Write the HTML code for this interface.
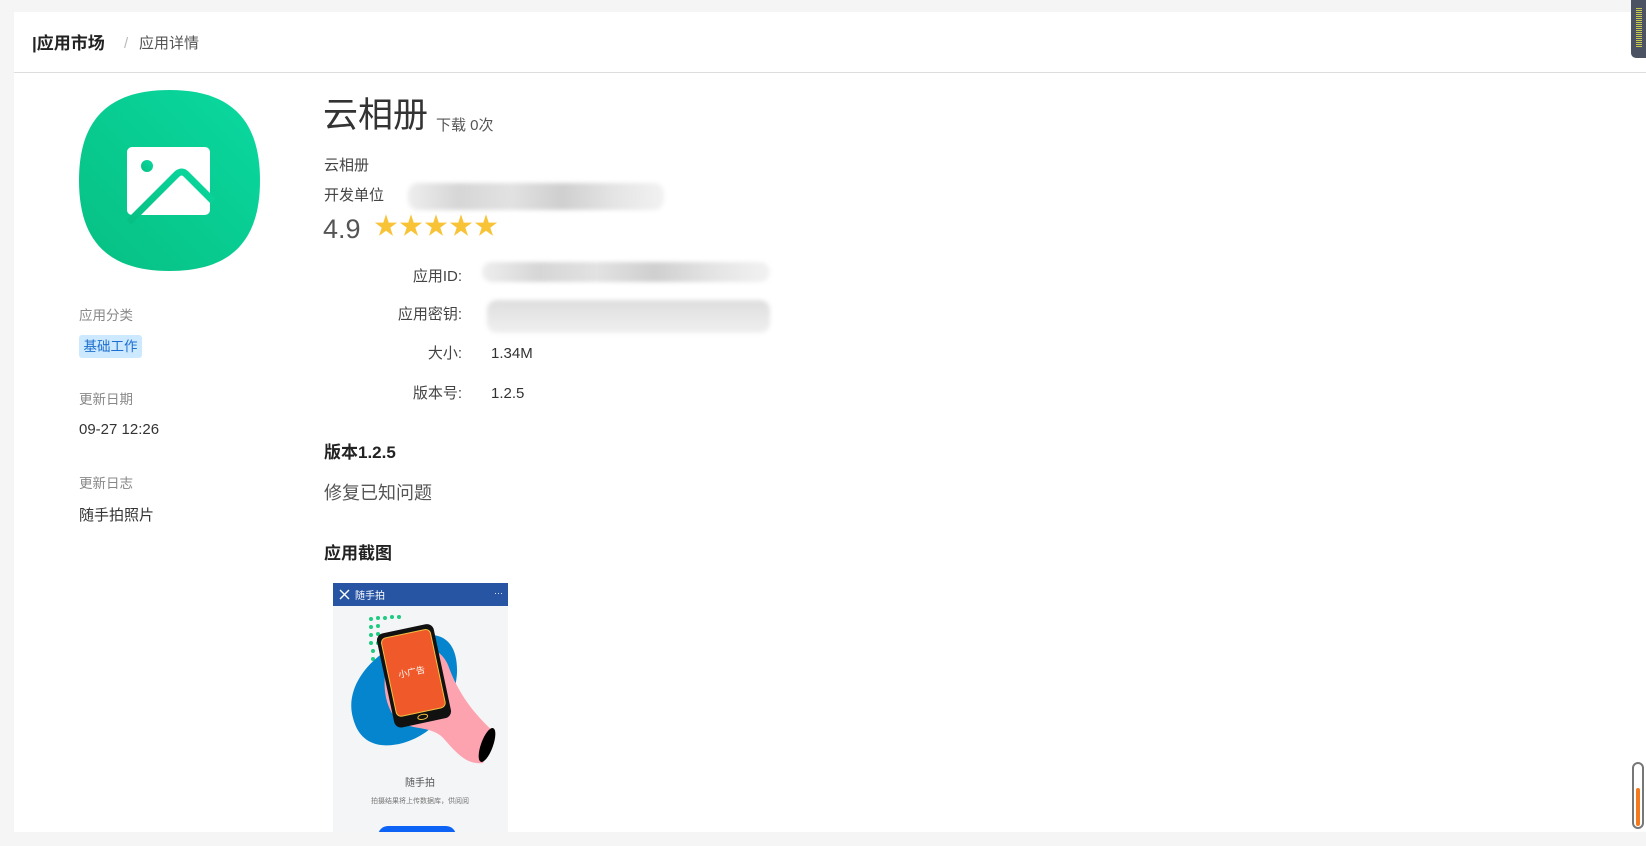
<!DOCTYPE html>
<html><head><meta charset="utf-8">
<style>
*{margin:0;padding:0;box-sizing:border-box}
body{width:1646px;height:846px;background:#f5f5f5;font-family:"Liberation Sans","Noto Sans CJK SC",sans-serif;position:relative;overflow:hidden;color:#333}
.card{position:absolute;left:14px;top:12px;width:1632px;height:820px;background:#fff}
.hdr{position:absolute;left:0;top:0;width:100%;height:61px;border-bottom:1px solid #ddd}
.a{position:absolute;white-space:nowrap;line-height:1}
.blur{position:absolute;border-radius:10px;background:linear-gradient(90deg,#eee,#d6d6d6 20%,#e2e2e2 40%,#cfcfcf 60%,#e4e4e4 80%,#f2f2f2);filter:blur(2px)}
.lab{position:absolute;width:140px;text-align:right;font-size:15px;color:#444;line-height:1}
</style></head><body>
<div class="card">
<div class="hdr"></div>
</div>
<div class="a" style="left:32px;top:35px;font-size:17px;font-weight:bold;color:#222">|应用市场</div>
<div class="a" style="left:124px;top:36px;font-size:15px;color:#bbb">/</div>
<div class="a" style="left:139px;top:36px;font-size:15px;color:#555">应用详情</div>

<svg style="position:absolute;left:79px;top:90px" width="181" height="181" viewBox="0 0 181 181">
<defs><linearGradient id="g" x1="1" y1="0" x2="0" y2="1"><stop offset="0" stop-color="#0ad9a0"/><stop offset="1" stop-color="#07bf82"/></linearGradient></defs>
<path d="M90.5 0C150 0 181 28 181 90.5S150 181 90.5 181 0 153 0 90.5 31 0 90.5 0Z" fill="url(#g)"/>
<rect x="48" y="57" width="83" height="68" rx="5" fill="#fff"/>
<circle cx="68" cy="76" r="6" fill="url(#g)"/>
<path d="M50 132 L98 84 Q103 80 107 84 L134 111" stroke="url(#g)" stroke-width="7" fill="none"/>
</svg>

<div class="a" style="left:79px;top:309px;font-size:13.5px;color:#888">应用分类</div>
<div class="a" style="left:79px;top:335px;width:63px;height:23px;background:#cde9ff;border-radius:3px;color:#1d6fcf;font-size:13.5px;padding-top:5px;text-align:center">基础工作</div>
<div class="a" style="left:79px;top:393px;font-size:13.5px;color:#888">更新日期</div>
<div class="a" style="left:79px;top:422px;font-size:15px;color:#333">09-27 12:26</div>
<div class="a" style="left:79px;top:477px;font-size:13.5px;color:#888">更新日志</div>
<div class="a" style="left:79px;top:508px;font-size:15px;color:#333">随手拍照片</div>

<div class="a" style="left:323px;top:98px;font-size:35px;color:#333">云相册</div>
<div class="a" style="left:436px;top:118px;font-size:15px;color:#555">下载 0次</div>
<div class="a" style="left:324px;top:158px;font-size:15px;color:#444">云相册</div>
<div class="a" style="left:324px;top:188px;font-size:15px;color:#444">开发单位</div>
<div class="blur" style="left:408px;top:183px;width:256px;height:27px"></div>
<div class="a" style="left:323px;top:216px;font-size:27px;color:#555">4.9</div>
<div class="a" style="left:374px;top:215px;font-size:24px;color:#f8c336;letter-spacing:1px">★★★★★</div>

<div class="lab" style="left:322px;top:269px">应用ID:</div>
<div class="blur" style="left:482px;top:262px;width:288px;height:20px"></div>
<div class="lab" style="left:322px;top:307px">应用密钥:</div>
<div class="blur" style="left:487px;top:300px;width:283px;height:33px;background:linear-gradient(180deg,#dedede,#f0f0f0)"></div>
<div class="lab" style="left:322px;top:346px">大小:</div>
<div class="a" style="left:491px;top:346px;font-size:15px;color:#333">1.34M</div>
<div class="lab" style="left:322px;top:386px">版本号:</div>
<div class="a" style="left:491px;top:386px;font-size:15px;color:#333">1.2.5</div>

<div class="a" style="left:324px;top:444px;font-size:17px;font-weight:bold;color:#222">版本1.2.5</div>
<div class="a" style="left:324px;top:484px;font-size:18px;color:#555">修复已知问题</div>
<div class="a" style="left:324px;top:545px;font-size:17px;font-weight:bold;color:#222">应用截图</div>

<svg style="position:absolute;left:333px;top:583px" width="175" height="249" viewBox="0 0 175 249">
<rect width="175" height="249" fill="#f4f5f7"/>
<rect width="175" height="23" fill="#2755a3"/>
<path d="M7 7l9 9M16 7l-9 9" stroke="#fff" stroke-width="1.4"/>
<text x="22" y="16" font-size="10" fill="#fff" font-family="Noto Sans CJK SC,sans-serif">随手拍</text>
<text x="161" y="13" font-size="9" fill="#fff">···</text>
<g fill="#1ecb82">
<circle cx="38" cy="36" r="2"/><circle cx="45" cy="35" r="2"/><circle cx="52" cy="35" r="2"/><circle cx="59" cy="34" r="2"/><circle cx="66" cy="34" r="2"/>
<circle cx="38" cy="44" r="2"/><circle cx="45" cy="43" r="2"/><circle cx="38" cy="52" r="2"/><circle cx="45" cy="51" r="2"/><circle cx="38" cy="60" r="2"/><circle cx="45" cy="60" r="2"/><circle cx="40" cy="68" r="2"/><circle cx="40" cy="76" r="2"/><circle cx="42" cy="84" r="2"/><circle cx="42" cy="92" r="2"/><circle cx="42" cy="100" r="2"/><circle cx="44" cy="108" r="2"/>
</g>
<path d="M20 135C10 100 45 65 80 55 110 45 125 60 124 90 122 120 105 150 70 160 40 168 25 155 20 135Z" fill="#0485ce"/>
<path d="M55 80C48 100 52 125 65 138 80 148 100 142 112 157 125 172 135 182 150 180L162 150C140 130 125 110 115 82 108 65 90 60 72 66Z" fill="#fda3b0"/>
<ellipse cx="154" cy="162" rx="6" ry="18" transform="rotate(20 154 162)" fill="#000"/>
<g transform="rotate(-12 80 93)">
<rect x="52" y="45" width="58" height="96" rx="7" fill="#111"/>
<rect x="56" y="50" width="50" height="80" rx="5" fill="#f05a2a" stroke="#f2c040" stroke-width="1"/>
<ellipse cx="81" cy="135" rx="5" ry="2.5" fill="none" stroke="#f2c040"/>
<text x="66" y="92" font-size="9" fill="#fff" font-family="Noto Sans CJK SC,sans-serif">小广告</text>
</g>
<text x="87" y="203" font-size="10" fill="#555" text-anchor="middle" font-family="Noto Sans CJK SC,sans-serif">随手拍</text>
<text x="87" y="220" font-size="7" fill="#777" text-anchor="middle" font-family="Noto Sans CJK SC,sans-serif">拍摄结果将上传数据库，供阅阅</text>
<rect x="45" y="243" width="78" height="20" rx="10" fill="#0d63f5"/>
</svg>

<div style="position:absolute;left:1631px;top:0;width:15px;height:58px;background:#4b5262;border-radius:0 0 0 5px"></div>
<div style="position:absolute;left:1636px;top:8px;width:6px;height:40px;background:repeating-linear-gradient(#c8c850 0 1px,#4b5262 1px 2px)"></div>
<div style="position:absolute;left:1632px;top:762px;width:12px;height:67px;border:2px solid #777;border-radius:6px;background:#fff"></div>
<div style="position:absolute;left:1636px;top:788px;width:4px;height:38px;background:#f57a1e;border-radius:2px"></div>
</body></html>
